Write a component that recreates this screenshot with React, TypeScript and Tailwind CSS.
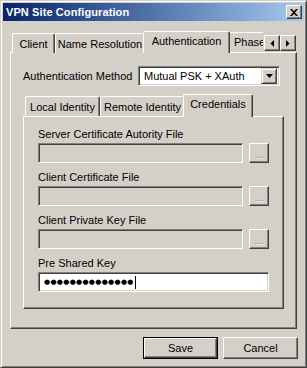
import React from "react";

const raised =
  "border border-t-white border-l-white border-r-[#404040] border-b-[#404040] shadow-[inset_-1px_-1px_0_#808080]";
const sunken =
  "border border-t-[#808080] border-l-[#808080] border-r-white border-b-white shadow-[inset_1px_1px_0_#404040,inset_-1px_-1px_0_#d4d0c8]";

function Tab({ label, w, active }: { label: string; w: number; active?: boolean }) {
  const base =
    "flex items-center justify-center border-l border-t border-r border-l-white border-t-white border-r-[#404040] rounded-tl-[2px] rounded-tr-[2px] shadow-[inset_-1px_0_0_#808080] bg-[#d4d0c8] whitespace-nowrap overflow-hidden shrink-0";
  if (active) {
    return (
      <div
        className={`${base} relative z-10 h-[23px] -mb-px -mx-[2px] pb-[3px]`}
        style={{ width: w + 4 }}
      >
        {label}
      </div>
    );
  }
  return (
    <div className={`${base} h-[20px] pt-[1px]`} style={{ width: w }}>
      {label}
    </div>
  );
}

function FileRow({ label }: { label: string }) {
  return (
    <div className="flex flex-col">
      <div className="h-[23px] flex items-end pb-[2px] leading-[13px]">{label}</div>
      <div className="flex items-center">
        <div className={`w-[205px] h-[20px] bg-[#d4d0c8] ${sunken}`} />
        <div
          className={`ml-[6px] w-[20px] h-[20px] flex items-end justify-center pb-[2px] text-[10px] leading-none text-[#808080] [text-shadow:1px_1px_0_#fff] ${raised}`}
        >
          ...
        </div>
      </div>
    </div>
  );
}

function ArrowBtn({ dir }: { dir: "l" | "r" }) {
  return (
    <div className={`w-[16px] h-[16px] bg-[#d4d0c8] flex items-center justify-center ${raised}`}>
      <svg width="4" height="7" viewBox="0 0 4 7">
        {dir === "l" ? (
          <polygon points="4,0 4,7 0.5,3.5" fill="#000" />
        ) : (
          <polygon points="0,0 0,7 3.5,3.5" fill="#000" />
        )}
      </svg>
    </div>
  );
}

export default function App() {
  return (
    <div className="w-[307px] h-[368px] bg-[#d4d0c8] font-['Liberation_Sans',Arial,sans-serif] text-[11px] text-black">
      <div className="w-full h-full border border-t-[#d4d0c8] border-l-[#d4d0c8] border-r-[#404040] border-b-[#404040] shadow-[inset_1px_1px_0_#fff,inset_-1px_-1px_0_#808080] p-[2px] flex flex-col">
        {/* Title bar */}
        <div className="h-[18px] bg-gradient-to-r from-[#0a246a] to-[#a6caf0] flex items-center pl-[3px] pr-[2px]">
          <span className="text-white font-bold text-[11px] tracking-[0.1px]">VPN Site Configuration</span>
          <div className="ml-auto w-[16px] h-[14px] bg-[#d4d0c8] border border-t-white border-l-white border-r-[#404040] border-b-[#404040] shadow-[inset_-1px_-1px_0_#808080] flex items-center justify-center">
            <svg width="8" height="7" viewBox="0 0 8 7">
              <path d="M0 0 L2 0 L4 2.3 L6 0 L8 0 L5 3.5 L8 7 L6 7 L4 4.7 L2 7 L0 7 L3 3.5 Z" fill="#000" />
            </svg>
          </div>
        </div>

        {/* Outer tabs */}
        <div className="mx-[7px] mt-[9px] flex flex-col">
          <div className="relative h-[22px] flex items-end pl-[2px] overflow-visible">
            <div className="flex items-end w-[251px] overflow-hidden h-[23px] -mb-px">
              <Tab label="Client" w={43} />
              <Tab label="Name Resolution" w={90} />
              <Tab label="Authentication" w={83} active />
              <div className="shrink-0 h-[20px] w-[60px] border-l border-t border-l-white border-t-white rounded-tl-[2px] flex items-center pl-[5px] self-end mb-px">
                Phase 1
              </div>
            </div>
            <div className="absolute right-[1px] top-[5px] flex">
              <ArrowBtn dir="l" />
              <ArrowBtn dir="r" />
            </div>
          </div>
          <div className={`h-[277px] ${raised} pt-[13px] px-[12px]`}>
            <div className="flex items-center">
              <span className="w-[115px]">Authentication Method</span>
              <div className={`w-[142px] h-[20px] bg-white ${sunken} p-[2px] flex items-center`}>
                <span className="pl-[3px]">Mutual PSK + XAuth</span>
                <div className={`ml-auto w-[16px] h-[16px] bg-[#d4d0c8] border border-t-[#d4d0c8] border-l-[#d4d0c8] border-r-[#404040] border-b-[#404040] shadow-[inset_1px_1px_0_#fff,inset_-1px_-1px_0_#808080] flex items-center justify-center`}>
                  <svg width="7" height="4" viewBox="0 0 7 4">
                    <polygon points="0,0 7,0 3.5,4" fill="#000" />
                  </svg>
                </div>
              </div>
            </div>

            {/* Inner tabs */}
            <div className="mt-[9px] flex flex-col">
              <div className="h-[21px] flex items-end pl-[2px]">
                <Tab label="Local Identity" w={75} />
                <Tab label="Remote Identity" w={85} />
                <Tab label="Credentials" w={66} active />
              </div>
              <div className={`h-[193px] ${raised} pl-[14px] pt-[3px]`}>
                <FileRow label="Server Certificate Autority File" />
                <FileRow label="Client Certificate File" />
                <FileRow label="Client Private Key File" />
                <div className="flex flex-col">
                  <div className="h-[23px] flex items-end pb-[2px] leading-[13px]">Pre Shared Key</div>
                  <div className={`w-[231px] h-[20px] bg-white ${sunken} flex items-center pl-[5px]`}>
                    <span className="font-['DejaVu_Sans',sans-serif] text-[7px] tracking-[0.3px] leading-none">●●●●●●●●●●●●●●</span>
                    <span className="ml-[1px] w-px h-[13px] bg-black" />
                  </div>
                </div>
              </div>
            </div>
          </div>
        </div>

        {/* Buttons */}
        <div className="flex justify-end mt-[8px] mr-[6px] gap-[5px]">
          <div className="w-[75px] h-[22px] border border-black">
            <div className={`w-full h-full ${raised} flex items-center justify-center`}>Save</div>
          </div>
          <div className={`w-[75px] h-[22px] ${raised} flex items-center justify-center`}>Cancel</div>
        </div>
      </div>
    </div>
  );
}
